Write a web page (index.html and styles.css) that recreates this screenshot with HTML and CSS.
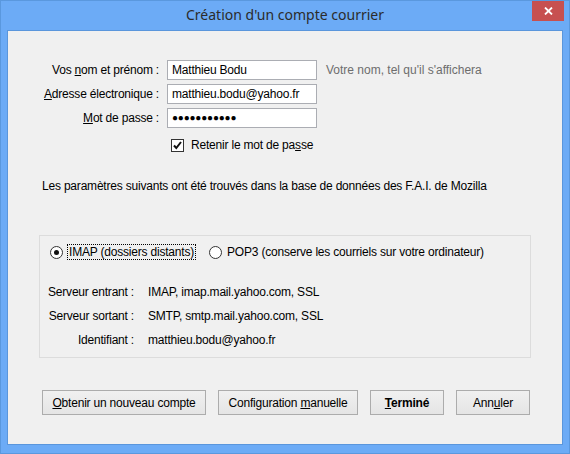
FILE: index.html
```html
<!DOCTYPE html>
<html lang="fr">
<head>
<meta charset="utf-8">
<title>Création d'un compte courrier</title>
<link rel="stylesheet" href="styles.css">
</head>
<body>
<div class="window">
  <div class="titlebar">
    <span class="title">Création d'un compte courrier</span>
    <div class="close"><svg width="9" height="8" viewBox="0 0 9 8"><path d="M1 0.5 L8 7.5 M8 0.5 L1 7.5" stroke="#fff" stroke-width="1.8"/></svg></div>
  </div>
  <div class="client">
    <div class="form">
      <label class="lbl">Vos <u>n</u>om et prénom :</label>
      <div class="input">Matthieu Bodu</div>
      <span class="hint">Votre nom, tel qu'il s'affichera</span>

      <label class="lbl"><u>A</u>dresse électronique :</label>
      <div class="input">matthieu.bodu@yahoo.fr</div>
      <span></span>

      <label class="lbl"><u>M</u>ot de passe :</label>
      <div class="input pwd">●●●●●●●●●●●</div>
      <span></span>

      <span></span>
      <div class="check-row">
        <span class="checkbox"><svg width="11" height="11" viewBox="0 0 11 11"><path d="M2 5.5 L4.3 8 L9 2" fill="none" stroke="#111" stroke-width="2"/></svg></span>
        <span>Retenir le mot de pa<u>s</u>se</span>
      </div>
    </div>

    <p class="info">Les paramètres suivants ont été trouvés dans la base de données des F.A.I. de Mozilla</p>

    <div class="group">
      <div class="radios">
        <div class="radio-item">
          <span class="radio checked"></span>
          <span class="focus">IMAP (dossiers distants)</span>
        </div>
        <div class="radio-item">
          <span class="radio"></span>
          <span class="plain">POP3 (conserve les courriels sur votre ordinateur)</span>
        </div>
      </div>
      <div class="servers">
        <span class="slbl">Serveur entrant :</span><span>IMAP, imap.mail.yahoo.com, SSL</span>
        <span class="slbl">Serveur sortant :</span><span>SMTP, smtp.mail.yahoo.com, SSL</span>
        <span class="slbl">Identifiant :</span><span>matthieu.bodu@yahoo.fr</span>
      </div>
    </div>

    <div class="buttons">
      <button class="btn b1"><u>O</u>btenir un nouveau compte</button>
      <button class="btn b2">Configuration <u>m</u>anuelle</button>
      <button class="btn b3 bold"><u>T</u>erminé</button>
      <button class="btn b4">Ann<u>u</u>ler</button>
    </div>
  </div>
</div>
</body>
</html>
```
FILE: styles.css
```css
* { box-sizing: border-box; }
html, body { margin: 0; padding: 0; }
body {
  width: 570px;
  height: 454px;
  font-family: "Liberation Sans", Arial, sans-serif;
  font-size: 12px;
  letter-spacing: -0.2px;
  color: #000;
}
.window {
  width: 570px;
  height: 454px;
  border: 1px solid #5a98de;
  background: #6cabf6;
  display: flex;
  flex-direction: column;
}
.titlebar {
  height: 29px;
  position: relative;
  display: flex;
  justify-content: center;
  align-items: center;
}
.title {
  font-family: "Noto Sans", sans-serif;
  font-size: 14px;
  letter-spacing: 0;
  color: #2b2b2b;
  padding-bottom: 3px;
}
.close {
  position: absolute;
  top: 0;
  right: 5px;
  width: 32px;
  height: 20px;
  background: #c75050;
  display: flex;
  align-items: center;
  justify-content: center;
}
.close svg { display: block; }
.client {
  margin: 0 6px 8px 6px;
  height: 415px;
  border: 1px solid #5a96dc;
  background: #f0f0f0;
  display: flex;
  flex-direction: column;
}
.form {
  display: grid;
  grid-template-columns: 152px 150px auto;
  column-gap: 7px;
  row-gap: 4px;
  margin-top: 29px;
  align-items: center;
}
.lbl {
  text-align: right;
  padding-right: 1px;
  white-space: nowrap;
}
.input {
  height: 20px;
  border: 1px solid #abadb3;
  background: #fff;
  padding: 0 4px;
  line-height: 18px;
  white-space: nowrap;
  overflow: hidden;
}
.pwd {
  font-size: 10px;
  letter-spacing: -0.2px;
}
.hint {
  color: #6d6d6d;
  margin-left: 2px;
  white-space: nowrap;
  letter-spacing: 0;
}
.check-row {
  grid-column: 2 / 4;
  display: flex;
  align-items: center;
  gap: 7px;
  margin-top: 5px;
  margin-left: 4px;
  white-space: nowrap;
  height: 16px;
}
.checkbox {
  width: 13px;
  height: 13px;
  border: 1px solid #333;
  background: #fff;
  display: inline-block;
}
.checkbox svg { display: block; }
.info {
  margin: 25px 0 0 34px;
  line-height: 16px;
  white-space: nowrap;
}
.group {
  margin: 41px 31px 0 31px;
  height: 123px;
  border: 1px solid #dcdcdc;
  padding: 8px 0 0 8px;
}
.radios {
  display: flex;
  align-items: center;
  gap: 13px;
  padding-left: 2px;
}
.radio-item {
  display: flex;
  align-items: center;
  gap: 4px;
}
.radio {
  width: 13px;
  height: 13px;
  border-radius: 50%;
  border: 1px solid #333;
  background: #fff;
  position: relative;
}
.radio.checked::after {
  content: "";
  position: absolute;
  left: 3px;
  top: 3px;
  width: 5px;
  height: 5px;
  border-radius: 50%;
  background: #111;
}
.focus {
  border: 1px dotted #000;
  padding: 0 1px;
  line-height: 14px;
  white-space: nowrap;
}
.plain { padding: 1px 1px; line-height: 14px; white-space: nowrap; }
.servers {
  display: grid;
  grid-template-columns: 86px auto;
  column-gap: 14px;
  row-gap: 8px;
  margin-top: 24px;
  line-height: 16px;
  white-space: nowrap;
}
.slbl { text-align: right; }
.buttons {
  display: flex;
  gap: 12px;
  margin: 32px 0 0 34px;
}
.btn {
  height: 25px;
  border: 1px solid #acacac;
  background: linear-gradient(#f0f0f0, #e5e5e5);
  font-family: inherit;
  font-size: 12px;
  letter-spacing: -0.2px;
  color: #000;
  padding: 0;
}
.b1 { width: 164px; }
.b2 { width: 140px; }
.b3 { width: 74px; }
.b4 { width: 74px; }
.bold { font-weight: bold; }
```
